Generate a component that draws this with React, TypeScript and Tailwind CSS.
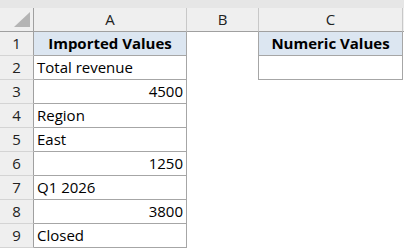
import React from "react";

const rows: { a: string; num?: boolean }[] = [
  { a: "Imported Values" },
  { a: "Total revenue" },
  { a: "4500", num: true },
  { a: "Region" },
  { a: "East" },
  { a: "1250", num: true },
  { a: "Q1 2026" },
  { a: "3800", num: true },
  { a: "Closed" },
];

export default function App() {
  return (
    <div
      className="w-[404px] h-[249px] bg-white overflow-hidden text-black"
      style={{ fontFamily: '"Open Sans", "Noto Sans", sans-serif' }}
    >
      <div className="h-[8px] bg-[#e6e6e6]" />
      <div className="grid grid-cols-[34px_153px_72px_144px_1px] auto-rows-[24px] text-[15px] leading-none">
        {/* header row */}
        <div className="relative bg-[#efefef] border-r border-b border-r-[#a0a0a0] border-b-[#a0a0a0]">
          <svg className="absolute left-[14px] top-[4px]" width="17" height="16" viewBox="0 0 17 16">
            <polygon points="16,0 16,15 0,15" fill="#b4b4b4" />
          </svg>
        </div>
        <div className="bg-[#efefef] border-r border-b border-r-[#c8c8c8] border-b-[#a0a0a0] flex items-center justify-center text-[#222]">A</div>
        <div className="bg-[#efefef] border-r border-b border-r-[#c8c8c8] border-b-[#a0a0a0] flex items-center justify-center text-[#222]">B</div>
        <div className="bg-[#efefef] border-r border-b border-r-[#c8c8c8] border-b-[#a0a0a0] flex items-center justify-center text-[#222]">C</div>
        <div className="bg-[#efefef] border-b border-b-[#a0a0a0]" />

        {rows.map((r, i) => (
          <React.Fragment key={i}>
            <div className="bg-[#efefef] border-r border-b border-r-[#a0a0a0] border-b-[#d4d4d4] flex items-center justify-center text-[#222]">
              {i + 1}
            </div>
            <div
              className={
                "border-r border-b border-[#a6a6a6] flex items-center px-[3px] whitespace-nowrap " +
                (i === 0
                  ? "bg-[#dce6f1] justify-center font-bold"
                  : r.num
                  ? "justify-end"
                  : "justify-start")
              }
            >
              {r.a}
            </div>
            <div className={i < 2 ? "border-r border-[#a6a6a6]" : ""} />
            <div
              className={
                i === 0
                  ? "bg-[#dce6f1] border-r border-b border-[#a6a6a6] flex items-center justify-center font-bold whitespace-nowrap"
                  : i === 1
                  ? "border-r border-b border-[#a6a6a6]"
                  : ""
              }
            >
              {i === 0 ? "Numeric Values" : ""}
            </div>
            <div />
          </React.Fragment>
        ))}
      </div>
    </div>
  );
}
